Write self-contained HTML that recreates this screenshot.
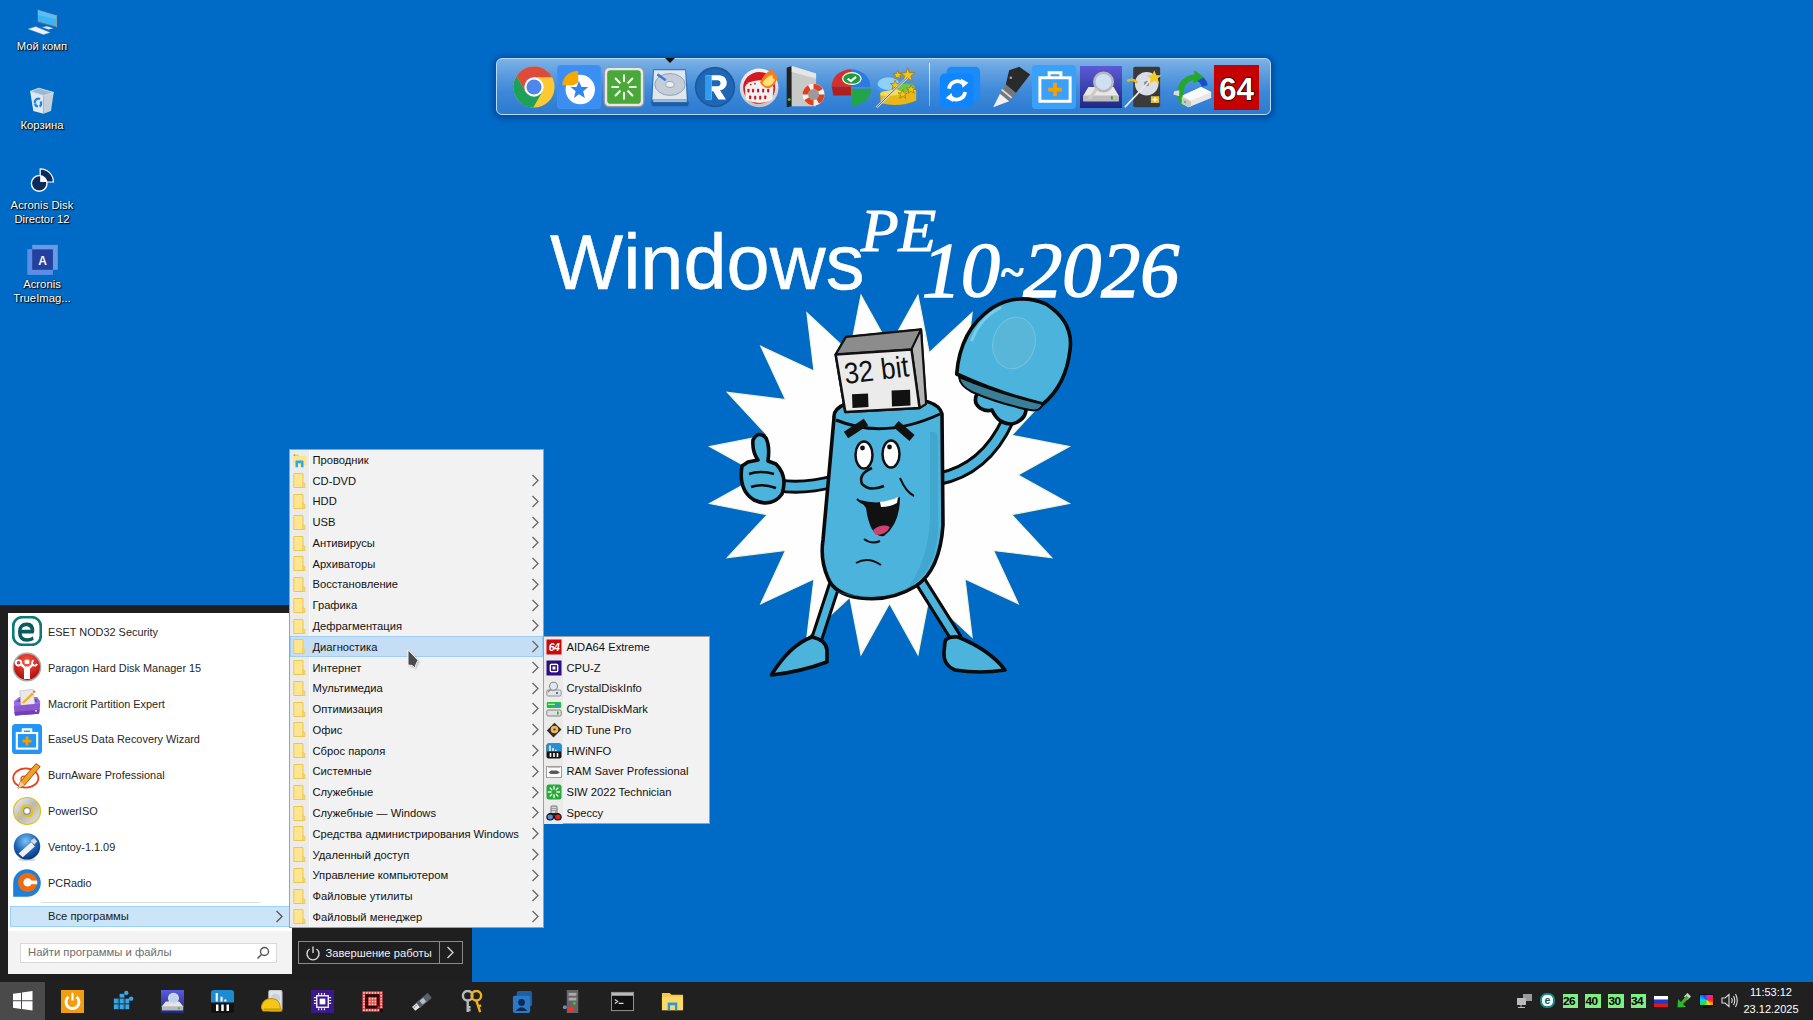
<!DOCTYPE html>
<html><head><meta charset="utf-8">
<style>
*{margin:0;padding:0;box-sizing:border-box}
html,body{width:1813px;height:1020px;overflow:hidden;background:#006ac7;font-family:"Liberation Sans",sans-serif;position:relative}
.a{position:absolute;display:block}
.t{position:absolute;white-space:nowrap}
</style></head><body>
<svg class="a" style="left:0;top:0" width="90" height="40" viewBox="0 0 90 40"><path d="M37.3 9 L56.7 14.9 V27.5 L37.3 22.4Z" fill="#5a6a7a"/><path d="M37.9 10 L56 15.5 V26.5 L37.9 21.6Z" fill="#3cb4f6"/><path d="M37.9 10 L56 15.5 V19 L37.9 15Z" fill="#6ac8fa" opacity=".6"/><path d="M56 15.2 L56.7 14.9 V27.5 L56 27Z" fill="#a8b4c0"/><path d="M42 27.3 L47 26.3 L53.3 28.2 L48.5 29.6Z" fill="#e0e6ec"/><path d="M28.4 29 L35.7 26.7 L49.8 32.5 L43.5 34.5Z" fill="#eef0f4" stroke="#c8ccd4" stroke-width=".4"/></svg>
<div class="t" style="left:-3px;width:90px;text-align:center;top:41.4px;font-size:11.3px;line-height:11.3px;color:#fff;text-shadow:1px 1px 1px #000,0 0 2px #111">Мой комп</div>
<svg class="a" style="left:0;top:80" width="90" height="40" viewBox="0 80 90 40"><path d="M30.2 91.4 L43.5 95.7 L43.5 113.7 L33.3 111Z" fill="#dfe8f0"/><path d="M43.5 95.7 L53.7 92.5 L51 111 L43.5 113.7Z" fill="#c4d0dc"/><path d="M30.2 91.4 L38.8 88.2 L53.7 92.5 L43.5 95.7Z" fill="#9fb6cc" stroke="#e8f0f6" stroke-width=".8"/><path d="M35 103 a3.5 3.5 0 0 1 5 -4 M40.5 101.5 a3.5 3.5 0 0 1 -1 5 M38 106.5 a3.5 3.5 0 0 1 -3 -3" stroke="#1a86e0" stroke-width="2.2" fill="none"/></svg>
<div class="t" style="left:-3px;width:90px;text-align:center;top:120.4px;font-size:11.3px;line-height:11.3px;color:#fff;text-shadow:1px 1px 1px #000,0 0 2px #111">Корзина</div>
<svg class="a" style="left:0;top:0" width="90" height="230" viewBox="0 0 90 230"><path d="M40.2 182 V168.8 A13.2 13.2 0 0 1 53.4 182Z" fill="#0d2a5c" stroke="#fff" stroke-width="1.2"/><circle cx="39.2" cy="183.4" r="7.8" fill="#0d2a5c" stroke="#fff" stroke-width="1.4"/><path d="M40.2 182 V175.8 A6.2 6.2 0 0 1 46.4 182Z" fill="#fff"/></svg>
<div class="t" style="left:-3px;width:90px;text-align:center;top:200.4px;font-size:11.3px;line-height:11.3px;color:#fff;text-shadow:1px 1px 1px #000,0 0 2px #111">Acronis Disk</div>
<div class="t" style="left:-3px;width:90px;text-align:center;top:214.4px;font-size:11.3px;line-height:11.3px;color:#fff;text-shadow:1px 1px 1px #000,0 0 2px #111">Director 12</div>
<svg class="a" style="left:0;top:238" width="90" height="40" viewBox="0 238 90 40"><rect x="32.2" y="244.9" width="25.6" height="24.9" fill="#6a9ae6"/><rect x="27.3" y="249.2" width="25.6" height="25.7" fill="#5c8ee6"/><rect x="32.2" y="249.4" width="20.7" height="20.4" fill="#22409e"/><text x="42.5" y="265.3" text-anchor="middle" font-family="Liberation Sans" font-weight="bold" font-size="12" fill="#f4f4f4">A</text></svg>
<div class="t" style="left:-3px;width:90px;text-align:center;top:279.4px;font-size:11.3px;line-height:11.3px;color:#fff;text-shadow:1px 1px 1px #000,0 0 2px #111">Acronis</div>
<div class="t" style="left:-3px;width:90px;text-align:center;top:293.4px;font-size:11.3px;line-height:11.3px;color:#fff;text-shadow:1px 1px 1px #000,0 0 2px #111">TrueImag...</div>
<div class="a" style="left:496px;top:58px;width:775px;height:57px;border-radius:6px;border:1px solid #b8daf6;background:linear-gradient(#7cb2e6,#5a9bdf 30%,#3d88d8 60%,#2b7bd2);box-shadow:0 1px 5px 3px rgba(0,30,90,.35)"></div>
<div class="a" style="left:557px;top:65px;width:44px;height:44px;border-radius:4px;background:#3d93f0"></div>
<div class="a" style="left:1032px;top:65px;width:44px;height:44px;border-radius:4px;background:#3aa0f8"></div>
<svg class="a" style="left:513px;top:66px" width="42" height="42" viewBox="0 0 100 100"><circle cx="50" cy="50" r="49" fill="#fcc934"/><path d="M50.00 27.00 L93.27 27.00 A49 49 0 0 0 8.45 24.03 L30.08 61.50 L50 50Z" fill="#dd4b3a"/><path d="M30.08 61.50 L8.45 24.03 A49 49 0 0 0 48.29 98.97 L69.92 61.50 L50 50Z" fill="#1fa05a"/>
<circle cx="50" cy="50" r="23" fill="#fff"/><circle cx="50" cy="50" r="18" fill="#4f86ec"/></svg>
<svg class="a" style="left:558px;top:66px" width="42" height="42" viewBox="0 0 100 100"><rect x="0" y="0" width="100" height="100" rx="10" fill="#3b8ff2"/>
<circle cx="53" cy="56" r="35" fill="#fff"/>
<path d="M10 46 A36 36 0 0 1 48 12 L48 40 L36 46Z" fill="#f5a800"/>
<polygon points="50,36 56,50 72,50 60,60 64,76 50,67 38,76 42,60 30,50 44,50" fill="#2f86ee"/></svg>
<svg class="a" style="left:603px;top:66px" width="42" height="42" viewBox="0 0 100 100"><rect x="3" y="3" width="94" height="94" rx="12" fill="#e8e8e8" stroke="#9a9a9a" stroke-width="3"/>
<rect x="10" y="10" width="80" height="80" rx="8" fill="#4aa83a"/>
<g stroke="#f4ffe8" stroke-width="5" stroke-linecap="round"><path d="M50 22v14M50 64v14M22 50h14M64 50h14M30 30l10 10M60 60l10 10M70 30L60 40M40 60L30 70"/></g></svg>
<svg class="a" style="left:649px;top:66px" width="42" height="42" viewBox="0 0 100 100"><path d="M10 8 H88 L94 88 H4 Z" fill="#2f6fb8"/><path d="M12 10 H86 L90 80 H8 Z" fill="#dfe7ef"/>
<ellipse cx="50" cy="44" rx="36" ry="26" fill="#c5ced8" stroke="#8a99aa" stroke-width="2"/><ellipse cx="50" cy="44" rx="10" ry="7" fill="#e9eef3" stroke="#8a99aa" stroke-width="2"/>
<path d="M20 20 L40 34" stroke="#3a7fd0" stroke-width="6"/><path d="M4 86 H96 L92 96 H8 Z" fill="#1d5ea8"/><rect x="10" y="80" width="80" height="6" fill="#9fb9d6"/></svg>
<svg class="a" style="left:694px;top:66px" width="42" height="42" viewBox="0 0 100 100"><circle cx="50" cy="50" r="48" fill="#1b5aa0"/><circle cx="50" cy="50" r="44" fill="#1f66b5"/>
<path d="M28 22 H58 A18 18 0 0 1 62 58 L76 80 H58 L46 60 H42 V80 H28 Z M42 34 V48 H56 A7 7 0 0 0 56 34 Z" fill="#fff"/>
<path d="M28 22 H42 V80 H28 Z" fill="#2f9bf0"/></svg>
<svg class="a" style="left:739px;top:66px" width="42" height="42" viewBox="0 0 100 100"><defs><linearGradient id="nrg" x1="0" y1="0" x2="0" y2="1"><stop offset="0" stop-color="#f4f4f4"/><stop offset="1" stop-color="#c4c4c4"/></linearGradient></defs>
<circle cx="48" cy="52" r="46" fill="url(#nrg)"/><circle cx="48" cy="52" r="38" fill="#d21a22"/>
<path d="M14 50 Q20 36 48 34 Q76 36 82 50 L80 80 Q48 96 16 80Z" fill="#f0f0f0"/>
<g fill="#c8141c"><rect x="20" y="54" width="5" height="9" rx="2"/><rect x="31" y="54" width="5" height="9" rx="2"/><rect x="43" y="54" width="5" height="9" rx="2"/><rect x="55" y="54" width="5" height="9" rx="2"/><rect x="67" y="54" width="5" height="9" rx="2"/>
<rect x="24" y="70" width="5" height="9" rx="2"/><rect x="36" y="71" width="5" height="9" rx="2"/><rect x="48" y="71" width="5" height="9" rx="2"/><rect x="60" y="70" width="5" height="9" rx="2"/><circle cx="28" cy="44" r="2"/><circle cx="38" cy="42" r="2"/></g>
<path d="M50 40 Q60 14 84 6 Q80 20 92 22 Q90 44 74 52 Q62 56 50 40Z" fill="#ff7a10"/><path d="M56 40 Q66 24 80 20 Q78 30 86 32 Q80 46 68 48 Q60 48 56 40Z" fill="#ffe27a"/></svg>
<svg class="a" style="left:785px;top:66px" width="42" height="42" viewBox="0 0 100 100"><path d="M4 4 L16 0 L16 96 L4 98 Z" fill="#222"/><path d="M16 0 L74 18 V96 L16 96Z" fill="#c9c9c9"/><path d="M16 0 L74 18 L74 30 L16 14Z" fill="#e6e6e6"/><circle cx="10" cy="80" r="3.5" fill="#4c4"/>
<circle cx="68" cy="68" r="26" fill="#f2f2f2"/><circle cx="68" cy="68" r="13" fill="#9a9a9a"/>
<path d="M68 42 A26 26 0 0 1 90 55 L79 61 A13 13 0 0 0 68 55Z M94 68 A26 26 0 0 1 81 90 L75 79 A13 13 0 0 0 81 68Z M68 94 A26 26 0 0 1 46 81 L57 75 A13 13 0 0 0 68 81Z M42 68 A26 26 0 0 1 55 46 L61 57 A13 13 0 0 0 55 68Z" fill="#e0401e"/></svg>
<svg class="a" style="left:830px;top:66px" width="42" height="42" viewBox="0 0 100 100"><path d="M50 50 L4 48 A46 40 0 0 1 50 8 Z" fill="#d62d2d"/><path d="M50 50 L50 8 A46 40 0 0 1 96 50Z" fill="#2d7be0"/>
<path d="M52 54 L98 54 A46 40 0 0 1 52 94 Z" fill="#22a54a"/><path d="M4 48 L50 50 L50 70 L8 70 Z" fill="#b01e1e"/>
<ellipse cx="52" cy="30" rx="22" ry="14" fill="#1d9c3a" stroke="#fff" stroke-width="3"/><path d="M42 30 l8 6 l12 -10" stroke="#fff" stroke-width="5" fill="none"/></svg>
<svg class="a" style="left:875px;top:66px" width="42" height="42" viewBox="0 0 100 100"><ellipse cx="32" cy="46" rx="30" ry="20" fill="#3a9ae8"/><ellipse cx="32" cy="42" rx="26" ry="15" fill="#8fd0f8"/>
<path d="M12 64 Q50 50 98 58 V82 Q56 100 14 88Z" fill="#e8b818"/><path d="M12 64 Q50 50 98 58 Q60 74 14 70Z" fill="#f8dc50"/><ellipse cx="74" cy="52" rx="22" ry="10" fill="#6cc848"/>
<g fill="#f2c818" stroke="#a87a08" stroke-width="2"><polygon points="78,4 82,16 95,16 85,24 89,36 78,29 67,36 71,24 61,16 74,16"/><polygon points="54,10 57,18 65,18 59,23 61,31 54,26 47,31 49,23 43,18 51,18"/><polygon points="48,34 51,42 59,42 53,47 55,55 48,50 41,55 43,47 37,42 45,42"/><polygon points="86,44 89,52 97,52 91,57 93,65 86,60 79,65 81,57 75,52 83,52"/><polygon points="66,56 69,64 77,64 71,69 73,77 66,72 59,77 61,69 55,64 63,64"/></g>
<path d="M4 98 L78 26" stroke="#f0f0f0" stroke-width="5"/><path d="M4 98 L78 26" stroke="#333" stroke-width="2"/></svg>
<svg class="a" style="left:939px;top:66px" width="42" height="42" viewBox="0 0 100 100"><rect x="18" y="2" width="80" height="80" rx="12" fill="#1c8af8"/><rect x="2" y="18" width="80" height="80" rx="12" fill="#0f86ff"/>
<path d="M24 54 A20 20 0 0 1 58 42" stroke="#fff" stroke-width="9" fill="none"/><polygon points="52,30 70,40 56,52" fill="#fff"/>
<path d="M62 62 A20 20 0 0 1 28 74" stroke="#fff" stroke-width="9" fill="none"/><polygon points="34,86 16,76 30,64" fill="#fff"/></svg>
<svg class="a" style="left:989px;top:66px" width="42" height="42" viewBox="0 0 100 100"><path d="M48 10 L72 2 L98 20 L64 64 L40 44Z" fill="#2a2a2a"/><path d="M40 44 L64 64 L48 84 L26 66Z" fill="#777"/>
<path d="M30 56 L54 76" stroke="#ddd" stroke-width="4"/><path d="M26 66 L48 84 L10 98Z" fill="#f0f0f0"/><circle cx="52" cy="28" r="3" fill="#aaa"/></svg>
<svg class="a" style="left:1034px;top:66px" width="42" height="42" viewBox="0 0 100 100"><rect x="0" y="0" width="100" height="100" rx="10" fill="#3aa0f8"/>
<rect x="14" y="28" width="72" height="56" fill="none" stroke="#fff" stroke-width="7"/><path d="M36 28 V16 H64 V28" fill="none" stroke="#fff" stroke-width="7"/>
<path d="M50 40 V72 M34 56 H66" stroke="#f5a000" stroke-width="9"/></svg>
<svg class="a" style="left:1080px;top:66px" width="42" height="42" viewBox="0 0 100 100"><defs><linearGradient id="cdg" x1="0" y1="0" x2="0" y2="1"><stop offset="0" stop-color="#5b5bd8"/><stop offset="1" stop-color="#1e2a80"/></linearGradient></defs>
<rect x="0" y="0" width="100" height="100" fill="url(#cdg)"/><path d="M8 70 L20 50 H80 L92 70 V84 H8Z" fill="#e8e8e8"/><path d="M8 70 H92 V84 H8Z" fill="#bdbdbd"/>
<circle cx="56" cy="38" r="22" fill="#cfe0f4" stroke="#b8b8b8" stroke-width="6"/><path d="M40 54 L22 78" stroke="#ccc" stroke-width="8"/><rect x="74" y="72" width="4" height="8" fill="#2a2"/></svg>
<svg class="a" style="left:1124px;top:66px" width="42" height="42" viewBox="0 0 100 100"><rect x="22" y="2" width="64" height="96" rx="4" fill="#3a3a3a"/><circle cx="54" cy="42" r="28" fill="#d8dde6"/><circle cx="54" cy="42" r="6" fill="#888"/>
<path d="M2 98 L72 24" stroke="#e8e8e8" stroke-width="4"/><polygon points="72,10 77,22 90,22 80,30 84,42 72,35 60,42 64,30 54,22 67,22" fill="#f5cc1a"/>
<path d="M8 36 Q20 28 32 40" stroke="#e8b820" stroke-width="6" fill="none"/><rect x="64" y="72" width="20" height="16" fill="#e8c040"/><path d="M74 74 V86 M68 80 H80" stroke="#fff" stroke-width="3"/></svg>
<svg class="a" style="left:1170px;top:66px" width="42" height="42" viewBox="0 0 100 100"><path d="M60 22 Q86 22 90 46 L76 50 Q72 36 58 34Z" fill="#1a4ec8"/>
<path d="M30 96 Q6 70 24 40 Q36 22 58 20 L58 10 L80 26 L56 42 L56 34 Q40 36 34 52 Q28 70 40 90Z" fill="#22a82a"/>
<path d="M8 68 L10 60 L22 58 L22 72Z" fill="#dcdcdc"/>
<path d="M30 70 L74 50 L98 62 L98 76 L44 98 L28 90Z" fill="#e8e8e8"/><path d="M30 70 L74 50 L98 62 L50 82Z" fill="#fafafa"/><path d="M28 74 L50 84 L50 98 L28 90Z" fill="#c8c8c8"/><circle cx="36" cy="86" r="2.5" fill="#3c3"/></svg>
<svg class="a" style="left:1214px;top:64.5px" width="45" height="45" viewBox="0 0 100 100"><rect x="0" y="0" width="100" height="100" fill="#c40000"/>
<text x="50" y="78" text-anchor="middle" font-family="Liberation Sans" font-weight="bold" font-size="70" fill="#fff" stroke="#000" stroke-width="3" paint-order="stroke">64</text></svg>
<div class="a" style="left:929px;top:63px;width:1.3px;height:43px;background:linear-gradient(rgba(230,245,255,.9),rgba(200,230,255,.5))"></div>
<svg class="a" style="left:665px;top:58px;" width="10" height="6" viewBox="0 0 10 6"><polygon points="0,0 10,0 5,5" fill="#111"/></svg>
<div class="t" style="left:550.00px;top:224.40px;font-size:77.5px;line-height:77.5px;color:#fff;font-family:'Liberation Sans',sans-serif;-webkit-text-stroke:.5px #fff">Windows</div>
<div class="t" style="left:861.00px;top:199.99px;font-size:61.5px;line-height:61.5px;color:#fff;font-family:'Liberation Serif',serif;font-style:italic;-webkit-text-stroke:1.2px #fff">PE</div>
<div class="t" style="left:922.00px;top:230.68px;font-size:78px;line-height:78px;color:#fff;font-family:'Liberation Serif',serif;font-style:italic;-webkit-text-stroke:1.6px #fff">10<span style="position:relative;top:-10px;font-size:.55em">~</span>2026</div>
<svg class="a" style="left:0;top:0" width="1813" height="1020" viewBox="0 0 1813 1020"><polygon points="1018.0,475.0 1069.3,503.5 1011.7,514.7 1051.7,557.6 993.5,550.5 1018.2,603.7 965.0,579.0 972.1,637.2 929.2,597.2 918.0,654.8 889.5,603.5 861.0,654.8 849.8,597.2 806.9,637.2 814.0,579.0 760.8,603.7 785.5,550.5 727.3,557.6 767.3,514.7 709.7,503.5 761.0,475.0 709.7,446.5 767.3,435.3 727.3,392.4 785.5,399.5 760.8,346.3 814.0,371.0 806.9,312.8 849.8,352.8 861.0,295.2 889.5,346.5 918.0,295.2 929.2,352.8 972.1,312.8 965.0,371.0 1018.2,346.3 993.5,399.5 1051.7,392.4 1011.7,435.3 1069.3,446.5" fill="#fefefe" stroke="#f2f4d0" stroke-width="1.2"/>
<!-- legs -->
<path d="M834 586 L817 638" stroke="#0a0a0a" stroke-width="13" fill="none" stroke-linecap="round"/><path d="M834 586 L817 638" stroke="#4cb4dc" stroke-width="7" fill="none" stroke-linecap="round"/>
<path d="M917 576 L956 638" stroke="#0a0a0a" stroke-width="13" fill="none" stroke-linecap="round"/><path d="M917 576 L956 638" stroke="#4cb4dc" stroke-width="7" fill="none" stroke-linecap="round"/>
<path d="M771.5 674.7 Q790 645 812 637 Q826 640 827 650 L827 662 Q800 672 771.5 675Z" fill="#4cb4dc" stroke="#0a0a0a" stroke-width="3.6" stroke-linejoin="round" stroke-linecap="round"/>
<path d="M945 642 Q946 636 958 637 Q990 650 1005 670 Q980 674 955 670 Q943 665 944 652Z" fill="#4cb4dc" stroke="#0a0a0a" stroke-width="3.6" stroke-linejoin="round" stroke-linecap="round"/>
<!-- left arm + fist -->
<path d="M836 481 Q800 490 778 485" stroke="#0a0a0a" stroke-width="14" fill="none" stroke-linecap="round"/><path d="M836 481 Q800 490 778 485" stroke="#4cb4dc" stroke-width="8" fill="none" stroke-linecap="round"/>
<path d="M742 466 Q738 490 754 500 Q772 508 782 494 Q788 476 776 464 L768 461 Q770 446 766 438 Q758 430 753 440 Q752 452 758 460 L748 462Z" fill="#4cb4dc" stroke="#0a0a0a" stroke-width="3.6" stroke-linejoin="round" stroke-linecap="round"/>
<path d="M749 474 Q760 470 774 474 M751 487 Q762 483 776 488" stroke="#0a0a0a" stroke-width="2.5" fill="none"/>
<!-- right arm -->
<path d="M938 479 Q985 470 1008 420" stroke="#0a0a0a" stroke-width="14" fill="none" stroke-linecap="round"/><path d="M938 479 Q985 470 1008 420" stroke="#4cb4dc" stroke-width="8" fill="none" stroke-linecap="round"/>
<path d="M978 392 Q972 402 980 408 Q986 412 992 410 Q998 424 1012 424 Q1028 420 1026 404 Q1016 396 1004 398 Q996 386 986 388Z" fill="#4cb4dc" stroke="#0a0a0a" stroke-width="3.6" stroke-linejoin="round" stroke-linecap="round"/>
<!-- cap -->
<path d="M956.7 374 Q960 330 992 308 Q1018 292 1046 304 Q1074 322 1070 350 Q1066 385 1043 404 Q1000 394 956.7 374Z" fill="#4cb4dc" stroke="#0a0a0a" stroke-width="3.6" stroke-linejoin="round" stroke-linecap="round"/>
<path d="M959 377 Q1000 394 1043 404 Q1040 412 1030 410 Q1000 404 972 392 Q960 386 959 377Z" fill="#3a7f98" stroke="#0a0a0a" stroke-width="2"/>
<ellipse cx="1014" cy="343" rx="21" ry="26" fill="#5ab6d8" stroke="#70c4e4" stroke-width="1" transform="rotate(15 1014 343)"/><path d="M972 340 Q980 318 1000 308" stroke="#86d2ee" stroke-width="3" fill="none" stroke-linecap="round" opacity=".8"/>
<!-- body -->
<path d="M834 418 Q832 400 884 398 Q938 396 942 414 L943 525 Q940 570 916 586 Q890 602 860 598 Q834 594 828 578 Q820 560 823 540Z" fill="#4cb4dc" stroke="#0a0a0a" stroke-width="3.6" stroke-linejoin="round" stroke-linecap="round"/>
<path d="M836 420 Q884 440 940 414" stroke="#0a0a0a" stroke-width="3" fill="none"/>
<path d="M930 432 Q938 430 938 440 L938 530 Q936 572 906 590 Q928 562 930 520Z" fill="#3596bd" opacity=".45"/>
<path d="M832 590 Q870 606 916 584 Q890 596 870 596 Q850 596 832 590Z" fill="#3596bd" opacity=".6"/>
<!-- usb connector -->
<path d="M835.7 354.6 L846 337 L921 329.6 L926 403.8 L919.6 408 L845.3 412Z" fill="#d8d8d8" stroke="#111" stroke-width="2.5" stroke-linejoin="round"/>
<path d="M835.7 354.6 L846 337 L921 329.6 L911.5 349.4Z" fill="#8c8c8c" stroke="#111" stroke-width="2" stroke-linejoin="round"/>
<path d="M911.5 349.4 L921 329.6 L926 403.8 L919.6 408Z" fill="#b4b4b4" stroke="#111" stroke-width="2" stroke-linejoin="round"/>
<path d="M835.7 354.6 L911.5 349.4 L919.6 408 L845.3 412Z" fill="#ebebeb" stroke="#111" stroke-width="2.5" stroke-linejoin="round"/>
<path d="M852 394.3 L868 393.5 L868.5 407 L852.5 408Z" fill="#111"/><path d="M891.6 390.6 L910 389.8 L910.5 405.5 L892 406.5Z" fill="#111"/>
<text x="0" y="0" font-family="Liberation Sans" font-size="26.5" fill="#111" transform="translate(845.5 384) rotate(-7) scale(1 1.12)">32 bit</text>
<!-- eyebrows -->
<path d="M846 435 L866 422" stroke="#111" stroke-width="8"/>
<path d="M896 424 L912 438" stroke="#111" stroke-width="8"/>
<!-- eyes -->
<ellipse cx="864" cy="455" rx="8.5" ry="13.5" fill="#fff" stroke="#111" stroke-width="2.5"/><ellipse cx="891" cy="454" rx="8.5" ry="13.5" fill="#fff" stroke="#111" stroke-width="2.5"/>
<circle cx="862.5" cy="448" r="2.4" fill="#111"/><circle cx="889.5" cy="447" r="2.4" fill="#111"/>
<!-- nose -->
<path d="M872 468 Q858 474 862 484 Q870 492 884 486" fill="#4cb4dc" stroke="#111" stroke-width="2.5"/>
<path d="M900 478 Q906 492 914 496" stroke="#111" stroke-width="2" fill="none"/>
<!-- mouth -->
<path d="M860 500 Q880 506 900 497 Q900 524 884 536 Q870 538 866 508Z" fill="#111"/>
<path d="M880 502 Q893 500 898 497 L897 503 Q890 507 881 507Z" fill="#fff"/>
<path d="M873 530 Q882 523 890 527 Q886 535 876 535Z" fill="#d04070"/>
<path d="M857 499 Q864 506 872 503" stroke="#111" stroke-width="2" fill="none"/>
<path d="M864 539 Q872 545 880 541" stroke="#111" stroke-width="2" fill="none"/>
<path d="M856 563 Q868 556 881 565" stroke="#111" stroke-width="2" fill="none"/>
</svg>
<div class="a" style="left:0px;top:605px;width:472px;height:377px;background:#1f1f1f"></div>
<div class="a" style="left:8px;top:613px;width:284px;height:361px;background:#fff"></div>
<div class="a" style="left:8px;top:931px;width:284px;height:43px;background:#f3f3f3"></div>
<svg class="a" style="left:12px;top:616px" width="30" height="30" viewBox="0 0 100 100"><rect x="4" y="4" width="92" height="92" rx="30" fill="#fff" stroke="#0b7a78" stroke-width="9"/>
<path d="M72 58 H32 Q34 74 52 74 Q62 74 70 68 L72 80 Q62 86 50 86 Q20 86 20 54 Q20 22 50 22 Q76 22 74 52Z M32 46 H62 Q60 34 48 34 Q34 34 32 46Z" fill="#0a5a5e"/></svg>
<div class="t" style="left:48.00px;top:626.77px;font-size:10.9px;line-height:10.9px;color:#262626;font-family:'Liberation Sans',sans-serif;">ESET NOD32 Security</div>
<svg class="a" style="left:12px;top:652px" width="30" height="30" viewBox="0 0 100 100"><defs><radialGradient id="prg" cx=".5" cy=".3" r=".7"><stop offset="0" stop-color="#ff5a4a"/><stop offset="1" stop-color="#b00808"/></radialGradient></defs>
<circle cx="50" cy="50" r="48" fill="#a8a8a8"/><circle cx="50" cy="50" r="43" fill="url(#prg)"/>
<circle cx="22" cy="36" r="9" fill="none" stroke="#fff" stroke-width="6"/><path d="M72 28 A9 9 0 1 0 84 40" fill="none" stroke="#fff" stroke-width="6"/>
<path d="M28 44 L40 56 V90 H60 V56 L72 44 L66 38 L56 48 H44 L34 38Z" fill="#fff"/><rect x="42" y="26" width="16" height="14" rx="3" fill="#fff"/></svg>
<div class="t" style="left:48.00px;top:662.67px;font-size:10.9px;line-height:10.9px;color:#262626;font-family:'Liberation Sans',sans-serif;">Paragon Hard Disk Manager 15</div>
<svg class="a" style="left:12px;top:688px" width="30" height="30" viewBox="0 0 100 100"><path d="M6 44 L24 30 H84 L94 44 L90 86 L10 92Z" fill="#9a6ee0"/><path d="M14 46 L28 36 H80 L86 46Z" fill="#6a40b0"/>
<path d="M30 58 L26 10 L70 4 L76 54Z" fill="#e8e8e8" stroke="#b8b8b8" stroke-width="2"/><path d="M36 50 L70 18" stroke="#f5b020" stroke-width="8"/><circle cx="74" cy="12" r="4" fill="#e86060"/>
<path d="M6 60 L94 52 L90 86 L10 92Z" fill="#8a58d0"/><path d="M8 80 L92 72 L90 86 L10 92Z" fill="#7040b8"/><circle cx="80" cy="76" r="3" fill="#fff"/></svg>
<div class="t" style="left:48.00px;top:698.57px;font-size:10.9px;line-height:10.9px;color:#262626;font-family:'Liberation Sans',sans-serif;">Macrorit Partition Expert</div>
<svg class="a" style="left:12px;top:724px" width="30" height="30" viewBox="0 0 100 100"><rect x="0" y="0" width="100" height="100" rx="12" fill="#2196f3"/><rect x="16" y="30" width="68" height="52" fill="none" stroke="#fff" stroke-width="7"/><path d="M36 30 V18 H64 V30" fill="none" stroke="#fff" stroke-width="7"/><path d="M50 42 V72 M35 57 H65" stroke="#f5a000" stroke-width="9"/></svg>
<div class="t" style="left:48.00px;top:734.47px;font-size:10.9px;line-height:10.9px;color:#262626;font-family:'Liberation Sans',sans-serif;">EaseUS Data Recovery Wizard</div>
<svg class="a" style="left:12px;top:760px" width="30" height="30" viewBox="0 0 100 100"><ellipse cx="46" cy="60" rx="42" ry="32" fill="none" stroke="#e8401a" stroke-width="6"/><circle cx="40" cy="64" r="10" fill="none" stroke="#e8401a" stroke-width="4"/>
<path d="M20 94 L28 72 L80 12 L94 22 L42 84Z" fill="#f5a020" stroke="#8a4a10" stroke-width="3"/><path d="M20 94 L28 72 L42 84Z" fill="#f0d0a0"/></svg>
<div class="t" style="left:48.00px;top:770.37px;font-size:10.9px;line-height:10.9px;color:#262626;font-family:'Liberation Sans',sans-serif;">BurnAware Professional</div>
<svg class="a" style="left:12px;top:796px" width="30" height="30" viewBox="0 0 100 100"><defs><linearGradient id="pis" x1="0" y1="0" x2="1" y2="1"><stop offset="0" stop-color="#f4f4f4"/><stop offset=".5" stop-color="#b8b8b8"/><stop offset="1" stop-color="#e8e8e8"/></linearGradient></defs>
<circle cx="50" cy="50" r="45" fill="url(#pis)" stroke="#e0c020" stroke-width="4"/><path d="M78 22 Q60 40 50 30 Q30 20 24 60 L14 72 Q24 40 46 36 Q62 38 78 22Z" fill="#e8c818"/><path d="M22 78 Q40 60 50 70 Q70 80 76 40 L86 28 Q76 60 54 64 Q38 62 22 78Z" fill="#e8c818"/>
<circle cx="50" cy="50" r="18" fill="none" stroke="#e0c020" stroke-width="5"/><circle cx="50" cy="50" r="11" fill="#fff" stroke="#8a8a8a" stroke-width="4"/></svg>
<div class="t" style="left:48.00px;top:806.27px;font-size:10.9px;line-height:10.9px;color:#262626;font-family:'Liberation Sans',sans-serif;">PowerISO</div>
<svg class="a" style="left:12px;top:832px" width="30" height="30" viewBox="0 0 100 100"><defs><radialGradient id="vtg" cx=".45" cy=".3" r=".75"><stop offset="0" stop-color="#7cc4f6"/><stop offset=".55" stop-color="#1c64b8"/><stop offset="1" stop-color="#0a2e6e"/></radialGradient></defs>
<ellipse cx="50" cy="92" rx="30" ry="5" fill="#8ab0d8" opacity=".5"/><circle cx="50" cy="48" r="44" fill="url(#vtg)"/><path d="M22 72 L64 34 L76 48 L36 84Z" fill="#f0f0f0"/><path d="M62 30 L74 20 L84 32 L74 42Z" fill="#d8d8d8"/></svg>
<div class="t" style="left:48.00px;top:842.17px;font-size:10.9px;line-height:10.9px;color:#262626;font-family:'Liberation Sans',sans-serif;">Ventoy-1.1.09</div>
<svg class="a" style="left:12px;top:868px" width="30" height="30" viewBox="0 0 100 100"><path d="M4 50 A46 46 0 1 1 50 96 H4Z" fill="#1e7fd8"/><circle cx="52" cy="48" r="32" fill="#f06a10"/><circle cx="52" cy="48" r="14" fill="#fff"/><rect x="52" y="42" width="32" height="12" fill="#fff"/></svg>
<div class="t" style="left:48.00px;top:878.07px;font-size:10.9px;line-height:10.9px;color:#262626;font-family:'Liberation Sans',sans-serif;">PCRadio</div>
<div class="a" style="left:41px;top:902px;width:219px;height:1px;background:#dcdcdc"></div>
<div class="a" style="left:10px;top:906px;width:281px;height:21px;background:#cce4f7;border:1px solid #99d1ff"></div>
<div class="t" style="left:48.00px;top:911.02px;font-size:11.2px;line-height:11.2px;color:#1a1a1a;font-family:'Liberation Sans',sans-serif;">Все программы</div>
<svg class="a" style="left:274.5px;top:910px" width="9" height="13" viewBox="0 0 9 13"><path d="M1.5 1 L7 6.5 L1.5 12" stroke="#555" stroke-width="1.3" fill="none"/></svg>
<div class="a" style="left:20px;top:943px;width:257px;height:20px;background:#fff;border:1px solid #d9d9d9"></div>
<div class="t" style="left:28.00px;top:947.43px;font-size:11.3px;line-height:11.3px;color:#6d6d6d;font-family:'Liberation Sans',sans-serif;">Найти программы и файлы</div>
<svg class="a" style="left:256px;top:946px;" width="14" height="14" viewBox="0 0 14 14"><circle cx="8.5" cy="5.5" r="4" fill="none" stroke="#555" stroke-width="1.4"/><path d="M5.5 8.5 L1.5 12.5" stroke="#555" stroke-width="1.6"/></svg>
<div class="a" style="left:298px;top:941px;width:165px;height:23px;border:1px solid #8a8a8a"></div>
<div class="a" style="left:439px;top:942px;width:1px;height:21px;background:#8a8a8a"></div>
<svg class="a" style="left:305px;top:945px;" width="16" height="16" viewBox="0 0 16 16"><path d="M4.5 4 A6 6 0 1 0 11.5 4" stroke="#d8d8d8" stroke-width="1.4" fill="none"/><path d="M8 1.5 V8" stroke="#d8d8d8" stroke-width="1.4"/></svg>
<div class="t" style="left:325.50px;top:947.52px;font-size:11.2px;line-height:11.2px;color:#f0f0f0;font-family:'Liberation Sans',sans-serif;">Завершение работы</div>
<svg class="a" style="left:446px;top:946px" width="9" height="13" viewBox="0 0 9 13"><path d="M1.5 1 L7 6.5 L1.5 12" stroke="#ddd" stroke-width="1.3" fill="none"/></svg>
<div class="a" style="left:289px;top:449px;width:255px;height:479px;background:#f2f2f2;border:1px solid #a0a0a0"></div>
<div class="a" style="left:290px;top:450px;width:20px;height:477px;background:#ebebeb"></div>
<div class="a" style="left:309px;top:450px;width:1px;height:477px;background:#fbfbfb"></div>
<svg class="a" style="left:292px;top:452.5px;" width="15" height="15" viewBox="0 0 15 15"><path d="M1 1.5 H6 L7.5 3 H14.5 V12 H1Z" fill="#fde58a"/><path d="M1 1.5 H6 L7.5 3 H1Z" fill="#f5d060"/><path d="M3.5 14.2 V8.5 Q3.5 7.5 4.5 7.5 H10.5 Q11.5 7.5 11.5 8.5 V14.2 H9 V10.2 H6 V14.2Z" fill="#2ea8e8"/><circle cx="2.5" cy="2.3" r=".8" fill="#4ab0d0"/></svg>
<div class="t" style="left:312.50px;top:454.82px;font-size:11.2px;line-height:11.2px;color:#111;font-family:'Liberation Sans',sans-serif;">Проводник</div>
<svg class="a" style="left:293.3px;top:473.2px" width="13" height="15" viewBox="0 0 13 15"><path d="M.8 .5 H10 V14.5 H.8Z" fill="#fde592" stroke="#ecc850"/><path d="M10 9.5 L11.8 10.5 V14.5 H10Z" fill="#fde592" stroke="#ecc850"/></svg>
<svg class="a" style="left:531px;top:474px" width="9" height="13" viewBox="0 0 9 13"><path d="M1.5 1 L7 6.5 L1.5 12" stroke="#666" stroke-width="1.3" fill="none"/></svg>
<div class="t" style="left:312.50px;top:475.59px;font-size:11.2px;line-height:11.2px;color:#111;font-family:'Liberation Sans',sans-serif;">CD-DVD</div>
<svg class="a" style="left:293.3px;top:493.9px" width="13" height="15" viewBox="0 0 13 15"><path d="M.8 .5 H10 V14.5 H.8Z" fill="#fde592" stroke="#ecc850"/><path d="M10 9.5 L11.8 10.5 V14.5 H10Z" fill="#fde592" stroke="#ecc850"/></svg>
<svg class="a" style="left:531px;top:495px" width="9" height="13" viewBox="0 0 9 13"><path d="M1.5 1 L7 6.5 L1.5 12" stroke="#666" stroke-width="1.3" fill="none"/></svg>
<div class="t" style="left:312.50px;top:496.37px;font-size:11.2px;line-height:11.2px;color:#111;font-family:'Liberation Sans',sans-serif;">HDD</div>
<svg class="a" style="left:293.3px;top:514.7px" width="13" height="15" viewBox="0 0 13 15"><path d="M.8 .5 H10 V14.5 H.8Z" fill="#fde592" stroke="#ecc850"/><path d="M10 9.5 L11.8 10.5 V14.5 H10Z" fill="#fde592" stroke="#ecc850"/></svg>
<svg class="a" style="left:531px;top:516px" width="9" height="13" viewBox="0 0 9 13"><path d="M1.5 1 L7 6.5 L1.5 12" stroke="#666" stroke-width="1.3" fill="none"/></svg>
<div class="t" style="left:312.50px;top:517.14px;font-size:11.2px;line-height:11.2px;color:#111;font-family:'Liberation Sans',sans-serif;">USB</div>
<svg class="a" style="left:293.3px;top:535.5px" width="13" height="15" viewBox="0 0 13 15"><path d="M.8 .5 H10 V14.5 H.8Z" fill="#fde592" stroke="#ecc850"/><path d="M10 9.5 L11.8 10.5 V14.5 H10Z" fill="#fde592" stroke="#ecc850"/></svg>
<svg class="a" style="left:531px;top:536px" width="9" height="13" viewBox="0 0 9 13"><path d="M1.5 1 L7 6.5 L1.5 12" stroke="#666" stroke-width="1.3" fill="none"/></svg>
<div class="t" style="left:312.50px;top:537.91px;font-size:11.2px;line-height:11.2px;color:#111;font-family:'Liberation Sans',sans-serif;">Антивирусы</div>
<svg class="a" style="left:293.3px;top:556.3px" width="13" height="15" viewBox="0 0 13 15"><path d="M.8 .5 H10 V14.5 H.8Z" fill="#fde592" stroke="#ecc850"/><path d="M10 9.5 L11.8 10.5 V14.5 H10Z" fill="#fde592" stroke="#ecc850"/></svg>
<svg class="a" style="left:531px;top:557px" width="9" height="13" viewBox="0 0 9 13"><path d="M1.5 1 L7 6.5 L1.5 12" stroke="#666" stroke-width="1.3" fill="none"/></svg>
<div class="t" style="left:312.50px;top:558.68px;font-size:11.2px;line-height:11.2px;color:#111;font-family:'Liberation Sans',sans-serif;">Архиваторы</div>
<svg class="a" style="left:293.3px;top:577.0px" width="13" height="15" viewBox="0 0 13 15"><path d="M.8 .5 H10 V14.5 H.8Z" fill="#fde592" stroke="#ecc850"/><path d="M10 9.5 L11.8 10.5 V14.5 H10Z" fill="#fde592" stroke="#ecc850"/></svg>
<svg class="a" style="left:531px;top:578px" width="9" height="13" viewBox="0 0 9 13"><path d="M1.5 1 L7 6.5 L1.5 12" stroke="#666" stroke-width="1.3" fill="none"/></svg>
<div class="t" style="left:312.50px;top:579.46px;font-size:11.2px;line-height:11.2px;color:#111;font-family:'Liberation Sans',sans-serif;">Восстановление</div>
<svg class="a" style="left:293.3px;top:597.8px" width="13" height="15" viewBox="0 0 13 15"><path d="M.8 .5 H10 V14.5 H.8Z" fill="#fde592" stroke="#ecc850"/><path d="M10 9.5 L11.8 10.5 V14.5 H10Z" fill="#fde592" stroke="#ecc850"/></svg>
<svg class="a" style="left:531px;top:599px" width="9" height="13" viewBox="0 0 9 13"><path d="M1.5 1 L7 6.5 L1.5 12" stroke="#666" stroke-width="1.3" fill="none"/></svg>
<div class="t" style="left:312.50px;top:600.23px;font-size:11.2px;line-height:11.2px;color:#111;font-family:'Liberation Sans',sans-serif;">Графика</div>
<svg class="a" style="left:293.3px;top:618.6px" width="13" height="15" viewBox="0 0 13 15"><path d="M.8 .5 H10 V14.5 H.8Z" fill="#fde592" stroke="#ecc850"/><path d="M10 9.5 L11.8 10.5 V14.5 H10Z" fill="#fde592" stroke="#ecc850"/></svg>
<svg class="a" style="left:531px;top:619px" width="9" height="13" viewBox="0 0 9 13"><path d="M1.5 1 L7 6.5 L1.5 12" stroke="#666" stroke-width="1.3" fill="none"/></svg>
<div class="t" style="left:312.50px;top:621.00px;font-size:11.2px;line-height:11.2px;color:#111;font-family:'Liberation Sans',sans-serif;">Дефрагментация</div>
<div class="a" style="left:290px;top:636px;width:253px;height:21px;background:#c6def5;border:1px solid #9ecff7"></div>
<svg class="a" style="left:293.3px;top:639.4px" width="13" height="15" viewBox="0 0 13 15"><path d="M.8 .5 H10 V14.5 H.8Z" fill="#fde592" stroke="#ecc850"/><path d="M10 9.5 L11.8 10.5 V14.5 H10Z" fill="#fde592" stroke="#ecc850"/></svg>
<svg class="a" style="left:531px;top:640px" width="9" height="13" viewBox="0 0 9 13"><path d="M1.5 1 L7 6.5 L1.5 12" stroke="#666" stroke-width="1.3" fill="none"/></svg>
<div class="t" style="left:312.50px;top:641.78px;font-size:11.2px;line-height:11.2px;color:#111;font-family:'Liberation Sans',sans-serif;">Диагностика</div>
<svg class="a" style="left:293.3px;top:660.1px" width="13" height="15" viewBox="0 0 13 15"><path d="M.8 .5 H10 V14.5 H.8Z" fill="#fde592" stroke="#ecc850"/><path d="M10 9.5 L11.8 10.5 V14.5 H10Z" fill="#fde592" stroke="#ecc850"/></svg>
<svg class="a" style="left:531px;top:661px" width="9" height="13" viewBox="0 0 9 13"><path d="M1.5 1 L7 6.5 L1.5 12" stroke="#666" stroke-width="1.3" fill="none"/></svg>
<div class="t" style="left:312.50px;top:662.55px;font-size:11.2px;line-height:11.2px;color:#111;font-family:'Liberation Sans',sans-serif;">Интернет</div>
<svg class="a" style="left:293.3px;top:680.9px" width="13" height="15" viewBox="0 0 13 15"><path d="M.8 .5 H10 V14.5 H.8Z" fill="#fde592" stroke="#ecc850"/><path d="M10 9.5 L11.8 10.5 V14.5 H10Z" fill="#fde592" stroke="#ecc850"/></svg>
<svg class="a" style="left:531px;top:682px" width="9" height="13" viewBox="0 0 9 13"><path d="M1.5 1 L7 6.5 L1.5 12" stroke="#666" stroke-width="1.3" fill="none"/></svg>
<div class="t" style="left:312.50px;top:683.32px;font-size:11.2px;line-height:11.2px;color:#111;font-family:'Liberation Sans',sans-serif;">Мультимедиа</div>
<svg class="a" style="left:293.3px;top:701.7px" width="13" height="15" viewBox="0 0 13 15"><path d="M.8 .5 H10 V14.5 H.8Z" fill="#fde592" stroke="#ecc850"/><path d="M10 9.5 L11.8 10.5 V14.5 H10Z" fill="#fde592" stroke="#ecc850"/></svg>
<svg class="a" style="left:531px;top:702px" width="9" height="13" viewBox="0 0 9 13"><path d="M1.5 1 L7 6.5 L1.5 12" stroke="#666" stroke-width="1.3" fill="none"/></svg>
<div class="t" style="left:312.50px;top:704.10px;font-size:11.2px;line-height:11.2px;color:#111;font-family:'Liberation Sans',sans-serif;">Оптимизация</div>
<svg class="a" style="left:293.3px;top:722.4px" width="13" height="15" viewBox="0 0 13 15"><path d="M.8 .5 H10 V14.5 H.8Z" fill="#fde592" stroke="#ecc850"/><path d="M10 9.5 L11.8 10.5 V14.5 H10Z" fill="#fde592" stroke="#ecc850"/></svg>
<svg class="a" style="left:531px;top:723px" width="9" height="13" viewBox="0 0 9 13"><path d="M1.5 1 L7 6.5 L1.5 12" stroke="#666" stroke-width="1.3" fill="none"/></svg>
<div class="t" style="left:312.50px;top:724.87px;font-size:11.2px;line-height:11.2px;color:#111;font-family:'Liberation Sans',sans-serif;">Офис</div>
<svg class="a" style="left:293.3px;top:743.2px" width="13" height="15" viewBox="0 0 13 15"><path d="M.8 .5 H10 V14.5 H.8Z" fill="#fde592" stroke="#ecc850"/><path d="M10 9.5 L11.8 10.5 V14.5 H10Z" fill="#fde592" stroke="#ecc850"/></svg>
<svg class="a" style="left:531px;top:744px" width="9" height="13" viewBox="0 0 9 13"><path d="M1.5 1 L7 6.5 L1.5 12" stroke="#666" stroke-width="1.3" fill="none"/></svg>
<div class="t" style="left:312.50px;top:745.64px;font-size:11.2px;line-height:11.2px;color:#111;font-family:'Liberation Sans',sans-serif;">Сброс пароля</div>
<svg class="a" style="left:293.3px;top:764.0px" width="13" height="15" viewBox="0 0 13 15"><path d="M.8 .5 H10 V14.5 H.8Z" fill="#fde592" stroke="#ecc850"/><path d="M10 9.5 L11.8 10.5 V14.5 H10Z" fill="#fde592" stroke="#ecc850"/></svg>
<svg class="a" style="left:531px;top:765px" width="9" height="13" viewBox="0 0 9 13"><path d="M1.5 1 L7 6.5 L1.5 12" stroke="#666" stroke-width="1.3" fill="none"/></svg>
<div class="t" style="left:312.50px;top:766.41px;font-size:11.2px;line-height:11.2px;color:#111;font-family:'Liberation Sans',sans-serif;">Системные</div>
<svg class="a" style="left:293.3px;top:784.8px" width="13" height="15" viewBox="0 0 13 15"><path d="M.8 .5 H10 V14.5 H.8Z" fill="#fde592" stroke="#ecc850"/><path d="M10 9.5 L11.8 10.5 V14.5 H10Z" fill="#fde592" stroke="#ecc850"/></svg>
<svg class="a" style="left:531px;top:786px" width="9" height="13" viewBox="0 0 9 13"><path d="M1.5 1 L7 6.5 L1.5 12" stroke="#666" stroke-width="1.3" fill="none"/></svg>
<div class="t" style="left:312.50px;top:787.19px;font-size:11.2px;line-height:11.2px;color:#111;font-family:'Liberation Sans',sans-serif;">Служебные</div>
<svg class="a" style="left:293.3px;top:805.5px" width="13" height="15" viewBox="0 0 13 15"><path d="M.8 .5 H10 V14.5 H.8Z" fill="#fde592" stroke="#ecc850"/><path d="M10 9.5 L11.8 10.5 V14.5 H10Z" fill="#fde592" stroke="#ecc850"/></svg>
<svg class="a" style="left:531px;top:806px" width="9" height="13" viewBox="0 0 9 13"><path d="M1.5 1 L7 6.5 L1.5 12" stroke="#666" stroke-width="1.3" fill="none"/></svg>
<div class="t" style="left:312.50px;top:807.96px;font-size:11.2px;line-height:11.2px;color:#111;font-family:'Liberation Sans',sans-serif;">Служебные — Windows</div>
<svg class="a" style="left:293.3px;top:826.3px" width="13" height="15" viewBox="0 0 13 15"><path d="M.8 .5 H10 V14.5 H.8Z" fill="#fde592" stroke="#ecc850"/><path d="M10 9.5 L11.8 10.5 V14.5 H10Z" fill="#fde592" stroke="#ecc850"/></svg>
<svg class="a" style="left:531px;top:827px" width="9" height="13" viewBox="0 0 9 13"><path d="M1.5 1 L7 6.5 L1.5 12" stroke="#666" stroke-width="1.3" fill="none"/></svg>
<div class="t" style="left:312.50px;top:828.73px;font-size:11.2px;line-height:11.2px;color:#111;font-family:'Liberation Sans',sans-serif;">Средства администрирования Windows</div>
<svg class="a" style="left:293.3px;top:847.1px" width="13" height="15" viewBox="0 0 13 15"><path d="M.8 .5 H10 V14.5 H.8Z" fill="#fde592" stroke="#ecc850"/><path d="M10 9.5 L11.8 10.5 V14.5 H10Z" fill="#fde592" stroke="#ecc850"/></svg>
<svg class="a" style="left:531px;top:848px" width="9" height="13" viewBox="0 0 9 13"><path d="M1.5 1 L7 6.5 L1.5 12" stroke="#666" stroke-width="1.3" fill="none"/></svg>
<div class="t" style="left:312.50px;top:849.51px;font-size:11.2px;line-height:11.2px;color:#111;font-family:'Liberation Sans',sans-serif;">Удаленный доступ</div>
<svg class="a" style="left:293.3px;top:867.9px" width="13" height="15" viewBox="0 0 13 15"><path d="M.8 .5 H10 V14.5 H.8Z" fill="#fde592" stroke="#ecc850"/><path d="M10 9.5 L11.8 10.5 V14.5 H10Z" fill="#fde592" stroke="#ecc850"/></svg>
<svg class="a" style="left:531px;top:869px" width="9" height="13" viewBox="0 0 9 13"><path d="M1.5 1 L7 6.5 L1.5 12" stroke="#666" stroke-width="1.3" fill="none"/></svg>
<div class="t" style="left:312.50px;top:870.28px;font-size:11.2px;line-height:11.2px;color:#111;font-family:'Liberation Sans',sans-serif;">Управление компьютером</div>
<svg class="a" style="left:293.3px;top:888.6px" width="13" height="15" viewBox="0 0 13 15"><path d="M.8 .5 H10 V14.5 H.8Z" fill="#fde592" stroke="#ecc850"/><path d="M10 9.5 L11.8 10.5 V14.5 H10Z" fill="#fde592" stroke="#ecc850"/></svg>
<svg class="a" style="left:531px;top:889px" width="9" height="13" viewBox="0 0 9 13"><path d="M1.5 1 L7 6.5 L1.5 12" stroke="#666" stroke-width="1.3" fill="none"/></svg>
<div class="t" style="left:312.50px;top:891.05px;font-size:11.2px;line-height:11.2px;color:#111;font-family:'Liberation Sans',sans-serif;">Файловые утилиты</div>
<svg class="a" style="left:293.3px;top:909.4px" width="13" height="15" viewBox="0 0 13 15"><path d="M.8 .5 H10 V14.5 H.8Z" fill="#fde592" stroke="#ecc850"/><path d="M10 9.5 L11.8 10.5 V14.5 H10Z" fill="#fde592" stroke="#ecc850"/></svg>
<svg class="a" style="left:531px;top:910px" width="9" height="13" viewBox="0 0 9 13"><path d="M1.5 1 L7 6.5 L1.5 12" stroke="#666" stroke-width="1.3" fill="none"/></svg>
<div class="t" style="left:312.50px;top:911.83px;font-size:11.2px;line-height:11.2px;color:#111;font-family:'Liberation Sans',sans-serif;">Файловый менеджер</div>
<div class="a" style="left:543px;top:636px;width:167px;height:188px;background:#f2f2f2;border:1px solid #a0a0a0"></div>
<div class="a" style="left:544px;top:637px;width:19px;height:187px;background:#ebebeb"></div>
<svg class="a" style="left:545.5px;top:639px" width="16" height="16" viewBox="0 0 16 16"><rect x="0.5" y="0.5" width="15" height="15" fill="#c80a0a"/><text x="8" y="12.3" text-anchor="middle" font-family="Liberation Sans" font-weight="bold" font-style="italic" font-size="10.5" fill="#fff" letter-spacing="-.5">64</text></svg>
<div class="t" style="left:566.50px;top:641.82px;font-size:11.2px;line-height:11.2px;color:#111;font-family:'Liberation Sans',sans-serif;">AIDA64 Extreme</div>
<svg class="a" style="left:545.5px;top:660px" width="16" height="16" viewBox="0 0 16 16"><rect x="0.5" y="0.5" width="15" height="15" fill="#2e0c82"/><rect x="4.5" y="4.5" width="7" height="7" fill="none" stroke="#fff" stroke-width="1.1"/><rect x="6.5" y="6.5" width="3" height="3" fill="#fff"/><path d="M3 6h1M3 8h1M3 10h1M12 6h1M12 8h1M12 10h1M6 3v1M8 3v1M10 3v1M6 12v1M8 12v1M10 12v1" stroke="#ddd" stroke-width=".8"/></svg>
<div class="t" style="left:566.50px;top:662.59px;font-size:11.2px;line-height:11.2px;color:#111;font-family:'Liberation Sans',sans-serif;">CPU-Z</div>
<svg class="a" style="left:545.5px;top:681px" width="16" height="16" viewBox="0 0 16 16"><rect x="0.8" y="9" width="14.4" height="6" rx="1.5" fill="#e4e4e4" stroke="#888" stroke-width=".9"/><circle cx="7.5" cy="5.2" r="4" fill="#dbe9f6" stroke="#8a8a8a" stroke-width="1.1"/><path d="M4.5 8.5 L2 11" stroke="#8a8a8a" stroke-width="1.3"/><circle cx="11" cy="12" r="1.1" fill="#2a4af0"/></svg>
<div class="t" style="left:566.50px;top:683.37px;font-size:11.2px;line-height:11.2px;color:#111;font-family:'Liberation Sans',sans-serif;">CrystalDiskInfo</div>
<svg class="a" style="left:545.5px;top:701px" width="16" height="16" viewBox="0 0 16 16"><rect x="0.8" y="1" width="14.4" height="6" rx="1" fill="#22c03a"/><path d="M2 3.3 H9" stroke="#bfffc8" stroke-width="1"/><rect x="9" y="2.5" width="4" height="3" fill="#3a8ae0"/><rect x="0.8" y="9" width="14.4" height="6" rx="1.5" fill="#e0e0e0" stroke="#777" stroke-width=".9"/><rect x="11" y="10.5" width="1.6" height="3" fill="#3a3"/></svg>
<div class="t" style="left:566.50px;top:704.14px;font-size:11.2px;line-height:11.2px;color:#111;font-family:'Liberation Sans',sans-serif;">CrystalDiskMark</div>
<svg class="a" style="left:545.5px;top:722px" width="16" height="16" viewBox="0 0 16 16"><path d="M8.5 0.8 L15.5 7.5 L7.5 15.5 L0.8 8.5Z" fill="#2e2e2e"/><circle cx="8.5" cy="7.5" r="3.8" fill="#f0b850"/><circle cx="8.5" cy="7.5" r="1.1" fill="#333"/></svg>
<div class="t" style="left:566.50px;top:724.91px;font-size:11.2px;line-height:11.2px;color:#111;font-family:'Liberation Sans',sans-serif;">HD Tune Pro</div>
<svg class="a" style="left:545.5px;top:743px" width="16" height="16" viewBox="0 0 16 16"><rect x="0.5" y="0.5" width="15" height="15" rx="2" fill="#151515"/><path d="M0.5 2.5 A2 2 0 0 1 2.5 0.5 H13.5 A2 2 0 0 1 15.5 2.5 V8.5 H0.5Z" fill="#2a8ed0"/><path d="M4 2.5 V8 M7 5 V8 M9.8 6.8 V8" stroke="#fff" stroke-width="1.4"/><path d="M4.5 10 V14 M8 10 V14 M11.5 10 V14" stroke="#fff" stroke-width="1.6"/></svg>
<div class="t" style="left:566.50px;top:745.68px;font-size:11.2px;line-height:11.2px;color:#111;font-family:'Liberation Sans',sans-serif;">HWiNFO</div>
<svg class="a" style="left:545.5px;top:764px" width="16" height="16" viewBox="0 0 16 16"><rect x="0.5" y="2.5" width="15" height="11" fill="#fafafa" stroke="#8a8a8a" stroke-width=".8"/><path d="M2 3.3 H14" stroke="#888" stroke-width=".6"/><path d="M2.5 8.5 L5 6.5 H11 L14 8.5 L11 10 H5Z" fill="#5a5a5a"/></svg>
<div class="t" style="left:566.50px;top:766.46px;font-size:11.2px;line-height:11.2px;color:#111;font-family:'Liberation Sans',sans-serif;">RAM Saver Professional</div>
<svg class="a" style="left:545.5px;top:784px" width="16" height="16" viewBox="0 0 16 16"><rect x="0.5" y="0.5" width="15" height="15" rx="2.5" fill="#28a83a"/><g stroke="#e8ffe8" stroke-width="1.4" stroke-linecap="round"><path d="M8 2.5v2.5M8 11v2.5M2.5 8h2.5M11 8h2.5M4.1 4.1l1.7 1.7M10.2 10.2l1.7 1.7M11.9 4.1l-1.7 1.7M5.8 10.2l-1.7 1.7"/></g></svg>
<div class="t" style="left:566.50px;top:787.23px;font-size:11.2px;line-height:11.2px;color:#111;font-family:'Liberation Sans',sans-serif;">SIW 2022 Technician</div>
<svg class="a" style="left:545.5px;top:805px" width="16" height="16" viewBox="0 0 16 16"><rect x="5" y="1" width="6" height="8" rx=".8" fill="#d8d8d8" stroke="#444" stroke-width=".7"/><path d="M5.5 3.5 H10.5 M5.5 5.5 H10.5" stroke="#777" stroke-width=".6"/><circle cx="9.5" cy="7" r=".7" fill="#2c2"/><path d="M1 10.5 L3 8 H13 L15 10.5" fill="#222"/><ellipse cx="4.2" cy="12" rx="3.3" ry="3" fill="#5a86d8" stroke="#111" stroke-width="1.2"/><ellipse cx="11.8" cy="12" rx="3.3" ry="3" fill="#e02424" stroke="#111" stroke-width="1.2"/></svg>
<div class="t" style="left:566.50px;top:808.00px;font-size:11.2px;line-height:11.2px;color:#111;font-family:'Liberation Sans',sans-serif;">Speccy</div>
<svg class="a" style="left:404px;top:647px;" width="18" height="25" viewBox="0 0 18 25"><defs><filter id="csh" x="-50%" y="-50%" width="200%" height="200%"><feGaussianBlur stdDeviation="1"/></filter></defs><path d="M4.5 4 V18.5 L8.5 19 L11 21.5 L12.5 17.5 L14.5 13.5Z" fill="#000" opacity=".25" filter="url(#csh)" transform="translate(.8 1)"/><path d="M4 2.8 V18 L8.3 18.5 L10.8 21 L12 17.3 L14 13.3Z" fill="#4a4a4a" stroke="#f4f4f4" stroke-width="1" stroke-linejoin="round"/></svg>
<div class="a" style="left:0px;top:982px;width:1813px;height:38px;background:#202020"></div>
<div class="a" style="left:0px;top:982px;width:45px;height:38px;background:#4a4a4a"></div>
<svg class="a" style="left:13px;top:991px;" width="20" height="20" viewBox="0 0 20 20"><path d="M0 2.8 L8 1.7 V9.3 H0Z M9 1.5 L19.5 0 V9.3 H9Z M0 10.3 H8 V17.9 L0 16.8Z M9 10.3 H19.5 V19.6 L9 18.1Z" fill="#fff"/></svg>
<svg class="a" style="left:61.2px;top:989.5px" width="23" height="23" viewBox="0 0 24 24"><rect x="0" y="0" width="24" height="24" fill="#f29d0f"/><path d="M7.8 7.2 A6.8 6.8 0 1 0 16.2 7.2" stroke="#fff" stroke-width="3" fill="none"/><path d="M12 3 V11" stroke="#fff" stroke-width="2.2"/></svg>
<svg class="a" style="left:111.2px;top:989.5px" width="23" height="23" viewBox="0 0 24 24"><g fill="#3aa6e6"><rect x="3" y="9" width="5" height="5"/><rect x="9" y="9" width="5" height="5"/><rect x="3" y="15" width="5" height="5"/><rect x="9" y="15" width="5" height="5"/><rect x="15" y="15" width="4" height="5"/><rect x="15" y="9" width="4" height="5"/><rect x="9" y="4" width="5" height="4"/><circle cx="16" cy="3" r="2.3"/><circle cx="21" cy="9" r="2.3"/></g><g fill="#1c6ea8"><rect x="7" y="9" width="1" height="11"/><rect x="13" y="9" width="1" height="11"/></g></svg>
<svg class="a" style="left:161.2px;top:989.5px" width="23" height="23" viewBox="0 0 24 24"><defs><linearGradient id="tg1" x1="0" y1="0" x2="0" y2="1"><stop offset="0" stop-color="#5a5ae0"/><stop offset="1" stop-color="#1e2a80"/></linearGradient></defs><rect width="24" height="24" fill="url(#tg1)"/><path d="M1 17 L5 12 H19 L23 17 V21 H1Z" fill="#e6e6e6"/><path d="M1 17 H23 V21 H1Z" fill="#b8b8b8"/><circle cx="13" cy="8.5" r="5" fill="#bcd4f0" stroke="#d8d8d8" stroke-width="1.5"/><path d="M9.5 12 L6 16" stroke="#ddd" stroke-width="2"/><rect x="18" y="18" width="1.5" height="2" fill="#2a2"/></svg>
<svg class="a" style="left:211.2px;top:989.5px" width="23" height="23" viewBox="0 0 24 24"><rect x="0" y="0" width="24" height="24" rx="3" fill="#111"/><path d="M0 3 A3 3 0 0 1 3 0 H21 A3 3 0 0 1 24 3 V13 H0Z" fill="#1e8ad0"/><path d="M6 3 V12 M11 7 V12 M15 10 V12" stroke="#fff" stroke-width="2.2"/><path d="M6.5 15 V22 M12 15 V22 M17.5 15 V22" stroke="#fff" stroke-width="2.6"/></svg>
<svg class="a" style="left:261.2px;top:989.5px" width="23" height="23" viewBox="0 0 24 24"><rect x="8" y="0" width="14" height="22" rx="2" fill="#e0e4ea" stroke="#aaa"/><circle cx="15" cy="9" r="5" fill="#c8d0dc"/><path d="M0 18 Q2 8 12 9 Q20 10 20 18 L22 22 H2Z" fill="#f5c518" stroke="#b88a00"/><path d="M3 20 H20" stroke="#c89a00" stroke-width="1.5"/></svg>
<svg class="a" style="left:311.2px;top:989.5px" width="23" height="23" viewBox="0 0 24 24"><rect width="24" height="24" fill="#3a1a8a"/><rect x="6" y="6" width="12" height="12" fill="none" stroke="#fff" stroke-width="1.4"/><rect x="9" y="9" width="6" height="6" fill="#fff"/><path d="M3 8h2M3 11h2M3 14h2M19 8h2M19 11h2M19 14h2M8 3v2M11 3v2M14 3v2M8 19v2M11 19v2M14 19v2" stroke="#fff" stroke-width="1.2"/></svg>
<svg class="a" style="left:361.2px;top:989.5px" width="23" height="23" viewBox="0 0 24 24"><rect x="1.5" y="1.5" width="3" height="3" fill="#ff5a5a"/><rect x="2.4" y="2.4" width="1.3" height="1.3" fill="#ffe8e8"/><rect x="4.5" y="1.5" width="3" height="3" fill="#ff5a5a"/><rect x="5.4" y="2.4" width="1.3" height="1.3" fill="#ffe8e8"/><rect x="7.5" y="1.5" width="3" height="3" fill="#ff5a5a"/><rect x="8.4" y="2.4" width="1.3" height="1.3" fill="#ffe8e8"/><rect x="10.5" y="1.5" width="3" height="3" fill="#ff5a5a"/><rect x="11.4" y="2.4" width="1.3" height="1.3" fill="#ffe8e8"/><rect x="13.5" y="1.5" width="3" height="3" fill="#ff5a5a"/><rect x="14.4" y="2.4" width="1.3" height="1.3" fill="#ffe8e8"/><rect x="16.5" y="1.5" width="3" height="3" fill="#ff5a5a"/><rect x="17.4" y="2.4" width="1.3" height="1.3" fill="#ffe8e8"/><rect x="19.5" y="1.5" width="3" height="3" fill="#ff5a5a"/><rect x="20.4" y="2.4" width="1.3" height="1.3" fill="#ffe8e8"/><rect x="1.5" y="4.5" width="3" height="3" fill="#ff5a5a"/><rect x="2.4" y="5.4" width="1.3" height="1.3" fill="#ffe8e8"/><rect x="4.5" y="4.5" width="3" height="3" fill="#1a0000"/><rect x="5.4" y="5.4" width="1.3" height="1.3" fill="#8a0000"/><rect x="7.5" y="4.5" width="3" height="3" fill="#1a0000"/><rect x="8.4" y="5.4" width="1.3" height="1.3" fill="#8a0000"/><rect x="10.5" y="4.5" width="3" height="3" fill="#1a0000"/><rect x="11.4" y="5.4" width="1.3" height="1.3" fill="#8a0000"/><rect x="13.5" y="4.5" width="3" height="3" fill="#1a0000"/><rect x="14.4" y="5.4" width="1.3" height="1.3" fill="#8a0000"/><rect x="16.5" y="4.5" width="3" height="3" fill="#1a0000"/><rect x="17.4" y="5.4" width="1.3" height="1.3" fill="#8a0000"/><rect x="19.5" y="4.5" width="3" height="3" fill="#ff5a5a"/><rect x="20.4" y="5.4" width="1.3" height="1.3" fill="#ffe8e8"/><rect x="1.5" y="7.5" width="3" height="3" fill="#ff5a5a"/><rect x="2.4" y="8.4" width="1.3" height="1.3" fill="#ffe8e8"/><rect x="4.5" y="7.5" width="3" height="3" fill="#1a0000"/><rect x="5.4" y="8.4" width="1.3" height="1.3" fill="#8a0000"/><rect x="7.5" y="7.5" width="3" height="3" fill="#ff5a5a"/><rect x="8.4" y="8.4" width="1.3" height="1.3" fill="#ffe8e8"/><rect x="10.5" y="7.5" width="3" height="3" fill="#ff5a5a"/><rect x="11.4" y="8.4" width="1.3" height="1.3" fill="#ffe8e8"/><rect x="13.5" y="7.5" width="3" height="3" fill="#ff5a5a"/><rect x="14.4" y="8.4" width="1.3" height="1.3" fill="#ffe8e8"/><rect x="16.5" y="7.5" width="3" height="3" fill="#1a0000"/><rect x="17.4" y="8.4" width="1.3" height="1.3" fill="#8a0000"/><rect x="19.5" y="7.5" width="3" height="3" fill="#ff5a5a"/><rect x="20.4" y="8.4" width="1.3" height="1.3" fill="#ffe8e8"/><rect x="1.5" y="10.5" width="3" height="3" fill="#ff5a5a"/><rect x="2.4" y="11.4" width="1.3" height="1.3" fill="#ffe8e8"/><rect x="4.5" y="10.5" width="3" height="3" fill="#1a0000"/><rect x="5.4" y="11.4" width="1.3" height="1.3" fill="#8a0000"/><rect x="7.5" y="10.5" width="3" height="3" fill="#ff5a5a"/><rect x="8.4" y="11.4" width="1.3" height="1.3" fill="#ffe8e8"/><rect x="10.5" y="10.5" width="3" height="3" fill="#ff5a5a"/><rect x="11.4" y="11.4" width="1.3" height="1.3" fill="#ffe8e8"/><rect x="13.5" y="10.5" width="3" height="3" fill="#ff5a5a"/><rect x="14.4" y="11.4" width="1.3" height="1.3" fill="#ffe8e8"/><rect x="16.5" y="10.5" width="3" height="3" fill="#1a0000"/><rect x="17.4" y="11.4" width="1.3" height="1.3" fill="#8a0000"/><rect x="19.5" y="10.5" width="3" height="3" fill="#ff5a5a"/><rect x="20.4" y="11.4" width="1.3" height="1.3" fill="#ffe8e8"/><rect x="1.5" y="13.5" width="3" height="3" fill="#ff5a5a"/><rect x="2.4" y="14.4" width="1.3" height="1.3" fill="#ffe8e8"/><rect x="4.5" y="13.5" width="3" height="3" fill="#1a0000"/><rect x="5.4" y="14.4" width="1.3" height="1.3" fill="#8a0000"/><rect x="7.5" y="13.5" width="3" height="3" fill="#ff5a5a"/><rect x="8.4" y="14.4" width="1.3" height="1.3" fill="#ffe8e8"/><rect x="10.5" y="13.5" width="3" height="3" fill="#ff5a5a"/><rect x="11.4" y="14.4" width="1.3" height="1.3" fill="#ffe8e8"/><rect x="13.5" y="13.5" width="3" height="3" fill="#ff5a5a"/><rect x="14.4" y="14.4" width="1.3" height="1.3" fill="#ffe8e8"/><rect x="16.5" y="13.5" width="3" height="3" fill="#1a0000"/><rect x="17.4" y="14.4" width="1.3" height="1.3" fill="#8a0000"/><rect x="19.5" y="13.5" width="3" height="3" fill="#ff5a5a"/><rect x="20.4" y="14.4" width="1.3" height="1.3" fill="#ffe8e8"/><rect x="1.5" y="16.5" width="3" height="3" fill="#ff5a5a"/><rect x="2.4" y="17.4" width="1.3" height="1.3" fill="#ffe8e8"/><rect x="4.5" y="16.5" width="3" height="3" fill="#1a0000"/><rect x="5.4" y="17.4" width="1.3" height="1.3" fill="#8a0000"/><rect x="7.5" y="16.5" width="3" height="3" fill="#1a0000"/><rect x="8.4" y="17.4" width="1.3" height="1.3" fill="#8a0000"/><rect x="10.5" y="16.5" width="3" height="3" fill="#1a0000"/><rect x="11.4" y="17.4" width="1.3" height="1.3" fill="#8a0000"/><rect x="13.5" y="16.5" width="3" height="3" fill="#1a0000"/><rect x="14.4" y="17.4" width="1.3" height="1.3" fill="#8a0000"/><rect x="16.5" y="16.5" width="3" height="3" fill="#a00000"/><rect x="17.4" y="17.4" width="1.3" height="1.3" fill="#f33"/><rect x="19.5" y="16.5" width="3" height="3" fill="#ff5a5a"/><rect x="20.4" y="17.4" width="1.3" height="1.3" fill="#ffe8e8"/><rect x="1.5" y="19.5" width="3" height="3" fill="#ff5a5a"/><rect x="2.4" y="20.4" width="1.3" height="1.3" fill="#ffe8e8"/><rect x="4.5" y="19.5" width="3" height="3" fill="#ff5a5a"/><rect x="5.4" y="20.4" width="1.3" height="1.3" fill="#ffe8e8"/><rect x="7.5" y="19.5" width="3" height="3" fill="#ff5a5a"/><rect x="8.4" y="20.4" width="1.3" height="1.3" fill="#ffe8e8"/><rect x="10.5" y="19.5" width="3" height="3" fill="#ff5a5a"/><rect x="11.4" y="20.4" width="1.3" height="1.3" fill="#ffe8e8"/><rect x="13.5" y="19.5" width="3" height="3" fill="#ff5a5a"/><rect x="14.4" y="20.4" width="1.3" height="1.3" fill="#ffe8e8"/><rect x="16.5" y="19.5" width="3" height="3" fill="#ff5a5a"/><rect x="17.4" y="20.4" width="1.3" height="1.3" fill="#ffe8e8"/><rect x="19.5" y="19.5" width="3" height="3" fill="#000"/><rect x="20.4" y="20.4" width="1.3" height="1.3" fill="#300"/></svg>
<svg class="a" style="left:411.2px;top:989.5px" width="23" height="23" viewBox="0 0 24 24"><g transform="rotate(-40 12 12)"><rect x="5" y="8.5" width="17" height="7" rx="1" fill="#5a5e66"/><rect x="10" y="9.5" width="5" height="5" fill="#b8bcc4"/><rect x="0" y="9.3" width="6" height="5.4" fill="#e8e8e8"/><rect x="1" y="10.5" width="1.5" height="1.2" fill="#777"/><rect x="3.2" y="10.5" width="1.5" height="1.2" fill="#777"/></g></svg>
<svg class="a" style="left:461.2px;top:989.5px" width="23" height="23" viewBox="0 0 24 24"><circle cx="7" cy="6" r="5" fill="none" stroke="#bbb" stroke-width="2.5"/><path d="M7 11 V23 M7 18 H10 M7 21 H10" stroke="#bbb" stroke-width="2.5"/><circle cx="16" cy="6" r="5" fill="none" stroke="#f0b020" stroke-width="2.5"/><path d="M16 11 L20 23 M18 17 L21 16" stroke="#f0b020" stroke-width="2.5"/></svg>
<svg class="a" style="left:511.2px;top:989.5px" width="23" height="23" viewBox="0 0 24 24"><rect x="6" y="1" width="16" height="16" rx="2" fill="#1e5fa0"/><rect x="2" y="6" width="18" height="18" rx="2" fill="#2a78c8"/><circle cx="11" cy="13" r="3.5" fill="#0a2a50"/><path d="M5 22 Q11 14 17 22Z" fill="#0a2a50"/></svg>
<svg class="a" style="left:561.2px;top:989.5px" width="23" height="23" viewBox="0 0 24 24"><rect x="6" y="0" width="12" height="24" fill="#666"/><rect x="8" y="3" width="8" height="3" fill="#aaa"/><rect x="8" y="8" width="8" height="3" fill="#aaa"/><circle cx="14" cy="14" r="1.5" fill="#3c3"/><circle cx="10" cy="20" r="3" fill="#e33"/><circle cx="4" cy="18" r="2" fill="#59c"/></svg>
<svg class="a" style="left:611.2px;top:989.5px" width="23" height="23" viewBox="0 0 24 24"><rect x="0.5" y="2.5" width="23" height="19" fill="#111" stroke="#999"/><rect x="1" y="3" width="22" height="3" fill="#bbb"/><path d="M4 10 L7 12 L4 14 M8 14 H13" stroke="#ddd" stroke-width="1.2" fill="none"/></svg>
<svg class="a" style="left:661.2px;top:989.5px" width="23" height="23" viewBox="0 0 24 24"><path d="M1 3 H9 L11 5 H23 V21 H1Z" fill="#f5c84a"/><path d="M1 7 H23 V21 H1Z" fill="#ffd966"/><path d="M7 21 V13 H17 V21 H14.5 V16 H9.5 V21Z" fill="#2a9ae0"/></svg>
<svg class="a" style="left:1517px;top:994px;" width="16" height="14" viewBox="0 0 16 14"><rect x="6" y="0" width="9" height="7" fill="#9a9a9a"/><rect x="0" y="4" width="9" height="7" fill="#bbb"/><path d="M4 11 V13 M1 13.5 H8" stroke="#bbb"/></svg>
<svg class="a" style="left:1540px;top:993px;" width="15" height="15" viewBox="0 0 15 15"><rect x="1" y="1" width="13" height="13" rx="5.5" fill="#fff" stroke="#1a8a86" stroke-width="2"/><text x="7.5" y="11.3" text-anchor="middle" font-family="Liberation Sans" font-weight="bold" font-size="10.5" fill="#0a5a5e">e</text></svg>
<div class="a" style="left:1562.5px;top:993.5px;width:15.5px;height:14px;background:#7ff07f"></div>
<div class="t" style="left:1563.00px;top:995.51px;font-size:11.8px;line-height:11.8px;color:#000;font-family:'Liberation Sans',sans-serif;font-weight:bold;letter-spacing:-.6px">26</div>
<div class="a" style="left:1585px;top:993.5px;width:15.5px;height:14px;background:#7ff07f"></div>
<div class="t" style="left:1585.50px;top:995.51px;font-size:11.8px;line-height:11.8px;color:#000;font-family:'Liberation Sans',sans-serif;font-weight:bold;letter-spacing:-.6px">40</div>
<div class="a" style="left:1608px;top:993.5px;width:15.5px;height:14px;background:#7ff07f"></div>
<div class="t" style="left:1608.50px;top:995.51px;font-size:11.8px;line-height:11.8px;color:#000;font-family:'Liberation Sans',sans-serif;font-weight:bold;letter-spacing:-.6px">30</div>
<div class="a" style="left:1630.5px;top:993.5px;width:15.5px;height:14px;background:#7ff07f"></div>
<div class="t" style="left:1631.00px;top:995.51px;font-size:11.8px;line-height:11.8px;color:#000;font-family:'Liberation Sans',sans-serif;font-weight:bold;letter-spacing:-.6px">34</div>
<svg class="a" style="left:1654px;top:996px;" width="14" height="11" viewBox="0 0 14 11"><rect width="14" height="3.7" fill="#fff"/><rect y="3.7" width="14" height="3.6" fill="#1a3ad0"/><rect y="7.3" width="14" height="3.7" fill="#e01818"/></svg>
<svg class="a" style="left:1676px;top:993px;" width="16" height="16" viewBox="0 0 16 16"><rect x="9" y="1" width="5" height="5" fill="#d0d0d0" transform="rotate(45 11.5 3.5)"/><path d="M13 5 L7 11 L10 14 L1.5 14.5 L2 6 L5 9 L10.5 2.5Z" fill="#2cb82c"/><circle cx="8.5" cy="7" r=".9" fill="#e07020"/></svg>
<div class="a" style="left:1699px;top:994px;width:15px;height:12px;background:#111;padding:1px"></div>
<div class="a" style="left:1700px;top:995px;width:13px;height:10px;background:conic-gradient(from 90deg,#ff2020,#ffe000,#20e020,#00d8ff,#2040ff,#e020e0,#ff2020)"></div>
<div class="a" style="left:1703px;top:1006px;width:9px;height:2px;background:#111"></div>
<svg class="a" style="left:1721px;top:993px;" width="17" height="15" viewBox="0 0 17 15"><path d="M1 5 H4 L8 1.5 V13.5 L4 10 H1Z" fill="none" stroke="#ddd" stroke-width="1.1"/><path d="M10.5 5 Q12 7.5 10.5 10 M12.5 3 Q15 7.5 12.5 12 M14.5 1 Q18 7.5 14.5 14" stroke="#ddd" stroke-width="1.1" fill="none"/></svg>
<div class="t" style="left:1740px;width:62px;text-align:center;top:986.7px;font-size:11px;line-height:11px;color:#fff">11:53:12</div>
<div class="t" style="left:1740px;width:62px;text-align:center;top:1004.2px;font-size:11px;line-height:11px;color:#fff">23.12.2025</div>
</body></html>
